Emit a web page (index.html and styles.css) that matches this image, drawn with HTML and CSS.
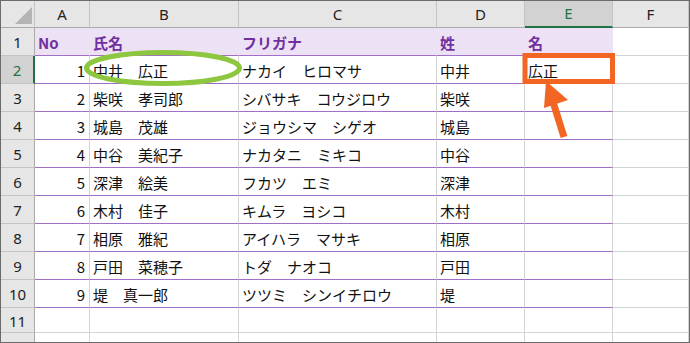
FILE: index.html
```html
<!DOCTYPE html>
<html lang="ja">
<head>
<meta charset="utf-8">
<title>Sheet</title>
<link rel="stylesheet" href="styles.css">
</head>
<body>
<div class="sheet">
  <div class="c h corner"><span class="tri"></span></div>
  <div class="c h">A</div>
  <div class="c h">B</div>
  <div class="c h">C</div>
  <div class="c h">D</div>
  <div class="c h sel-col">E</div>
  <div class="c h">F</div>

  <div class="c rh">1</div>
  <div class="c t hd">No</div>
  <div class="c t hd">氏名</div>
  <div class="c t hd">フリガナ</div>
  <div class="c t hd">姓</div>
  <div class="c t hd">名</div>
  <div class="c"></div>

  <div class="c rh sel-row">2</div>
  <div class="c t num">1</div>
  <div class="c t">中井　広正</div>
  <div class="c t">ナカイ　ヒロマサ</div>
  <div class="c t">中井</div>
  <div class="c t">広正</div>
  <div class="c"></div>

  <div class="c rh">3</div>
  <div class="c t num">2</div>
  <div class="c t">柴咲　孝司郎</div>
  <div class="c t">シバサキ　コウジロウ</div>
  <div class="c t">柴咲</div>
  <div class="c t"></div>
  <div class="c"></div>

  <div class="c rh">4</div>
  <div class="c t num">3</div>
  <div class="c t">城島　茂雄</div>
  <div class="c t">ジョウシマ　シゲオ</div>
  <div class="c t">城島</div>
  <div class="c t"></div>
  <div class="c"></div>

  <div class="c rh">5</div>
  <div class="c t num">4</div>
  <div class="c t">中谷　美紀子</div>
  <div class="c t">ナカタニ　ミキコ</div>
  <div class="c t">中谷</div>
  <div class="c t"></div>
  <div class="c"></div>

  <div class="c rh">6</div>
  <div class="c t num">5</div>
  <div class="c t">深津　絵美</div>
  <div class="c t">フカツ　エミ</div>
  <div class="c t">深津</div>
  <div class="c t"></div>
  <div class="c"></div>

  <div class="c rh">7</div>
  <div class="c t num">6</div>
  <div class="c t">木村　佳子</div>
  <div class="c t">キムラ　ヨシコ</div>
  <div class="c t">木村</div>
  <div class="c t"></div>
  <div class="c"></div>

  <div class="c rh">8</div>
  <div class="c t num">7</div>
  <div class="c t">相原　雅紀</div>
  <div class="c t">アイハラ　マサキ</div>
  <div class="c t">相原</div>
  <div class="c t"></div>
  <div class="c"></div>

  <div class="c rh">9</div>
  <div class="c t num">8</div>
  <div class="c t">戸田　菜穂子</div>
  <div class="c t">トダ　ナオコ</div>
  <div class="c t">戸田</div>
  <div class="c t"></div>
  <div class="c"></div>

  <div class="c rh">10</div>
  <div class="c t num">9</div>
  <div class="c t">堤　真一郎</div>
  <div class="c t">ツツミ　シンイチロウ</div>
  <div class="c t">堤</div>
  <div class="c t"></div>
  <div class="c"></div>

  <div class="c rh">11</div>
  <div class="c"></div>
  <div class="c"></div>
  <div class="c"></div>
  <div class="c"></div>
  <div class="c"></div>
  <div class="c"></div>

  <div class="c rh">12</div>
  <div class="c"></div>
  <div class="c"></div>
  <div class="c"></div>
  <div class="c"></div>
  <div class="c"></div>
  <div class="c"></div>

  <svg class="overlay" width="690" height="343" viewBox="0 0 690 343">
    <ellipse cx="163" cy="68" rx="76.5" ry="15.5" fill="none" stroke="#8dc63f" stroke-width="5"/>
    <rect x="525" y="55.5" width="87.5" height="26" fill="none" stroke="#f26522" stroke-width="5"/>
    <line x1="564" y1="137" x2="553" y2="102" stroke="#f26522" stroke-width="7"/>
    <polygon points="546,81 544,108 568,100" fill="#f26522"/>
  </svg>
</div>
</body>
</html>
```

FILE: styles.css
```css
html, body {
  margin: 0;
  padding: 0;
  background: #ffffff;
}

.sheet {
  position: relative;
  width: 690px;
  height: 343px;
  box-sizing: border-box;
  border: 1px solid #6b6b6b;
  overflow: hidden;
  display: grid;
  grid-template-columns: 34px 55px 149px 198px 88px 88px 1fr;
  grid-template-rows: 27px repeat(10, 28px) 25px 25px;
  font-family: "Noto Sans CJK JP", "Noto Sans", sans-serif;
  font-size: 15px;
  line-height: 1;
  color: #111;
  background: #fff;
}

.c {
  box-sizing: border-box;
  border-right: 1px solid #d4d4d4;
  border-bottom: 1px solid #d4d4d4;
  display: flex;
  align-items: center;
  padding: 1px 3px 0 3px;
  white-space: nowrap;
  overflow: hidden;
}

.h {
  background: #e6e6e6;
  justify-content: center;
  border-right-color: #c4c4c4;
  border-bottom-color: #ababab;
  color: #222;
  font-family: "Noto Sans", "Noto Sans CJK JP", sans-serif;
  padding-top: 0;
}

.corner {
  position: relative;
}

.tri {
  position: absolute;
  left: 14px;
  top: 6px;
  width: 0;
  height: 0;
  border-left: 17px solid transparent;
  border-bottom: 17px solid #b4b4b4;
}

.sel-col {
  background: #d2d2d2;
  color: #217346;
  border-bottom: 2px solid #217346;
}

.rh {
  background: #e6e6e6;
  justify-content: center;
  border-right-color: #ababab;
  border-bottom-color: #c4c4c4;
  color: #222;
  font-family: "Noto Sans", "Noto Sans CJK JP", sans-serif;
  padding: 2px 0 0 0;
  align-items: center;
}

.sel-row {
  background: #d2d2d2;
  color: #217346;
  border-right: 2px solid #217346;
}

.t {
  border-bottom-color: #a070c8;
}

.hd {
  background: #ede1f5;
  color: #7030a0;
  font-weight: 700;
  border-right-color: #ede1f5;
}

.num {
  justify-content: flex-end;
  padding-right: 4px;
}

.overlay {
  position: absolute;
  left: -1px;
  top: -1px;
  pointer-events: none;
}
```
